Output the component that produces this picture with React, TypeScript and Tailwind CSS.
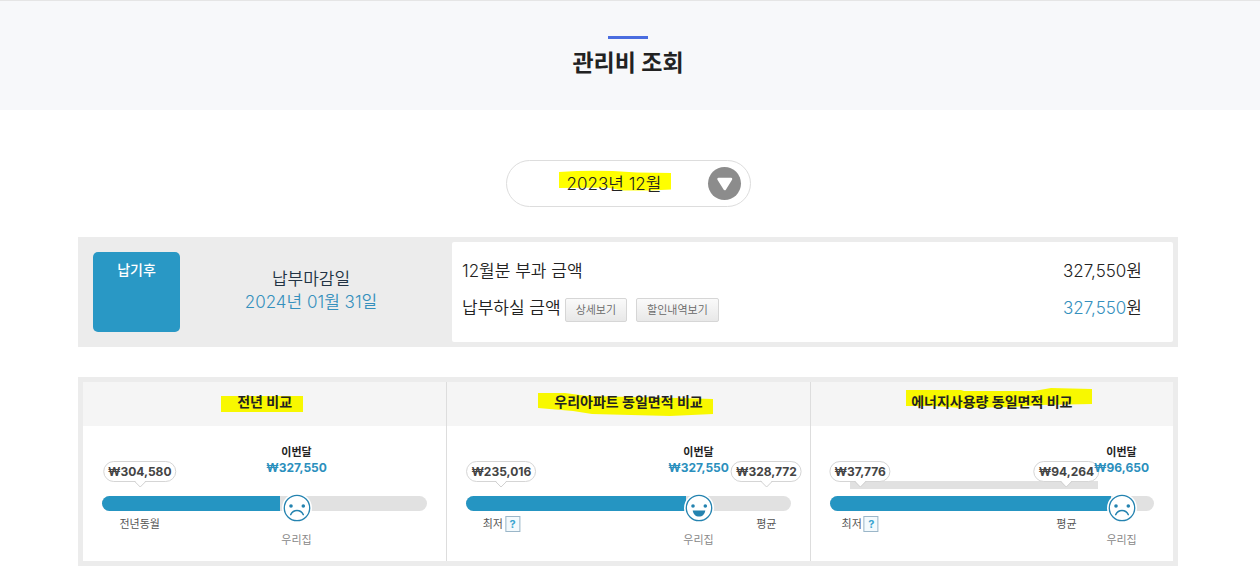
import { useState } from "react";

type Mood = "sad" | "happy";

interface Marker {
  label: string;
  amount: string;
  at: number;
  help?: boolean;
}

interface Comparison {
  id: string;
  title: string;
  highlight: string;
  current: string;
  currentAt: number;
  filled: number;
  mood: Mood;
  markers: Marker[];
  range?: { from: number; to: number };
}

const months = ["2023년 12월", "2023년 11월", "2023년 10월"];

const comparisons: Comparison[] = [
  {
    id: "year",
    title: "전년 비교",
    highlight: "56,14 138,14 138,30 56,30",
    current: "₩327,550",
    currentAt: 59.8,
    filled: 54.6,
    mood: "sad",
    markers: [{ label: "전년동월", amount: "₩304,580", at: 11.6 }],
  },
  {
    id: "apartment",
    title: "우리아파트 동일면적 비교",
    highlight:
      "10,11 37,11 59,14 150,16 185,17 185,32 142,34 64,32 45,29 10,26",
    current: "₩327,550",
    currentAt: 71.6,
    filled: 67.8,
    mood: "happy",
    markers: [
      { label: "최저", amount: "₩235,016", at: 10.8, help: true },
      { label: "평균", amount: "₩328,772", at: 92.5 },
    ],
  },
  {
    id: "energy",
    title: "에너지사용량 동일면적 비교",
    highlight:
      "14,8 69,8 72,9 142,9 159,6 200,7 200,22 149,23 122,25 69,26 42,24 14,24",
    current: "₩96,650",
    currentAt: 90,
    filled: 86.7,
    mood: "sad",
    markers: [
      { label: "최저", amount: "₩37,776", at: 9.4, help: true },
      { label: "평균", amount: "₩94,264", at: 73 },
    ],
    range: { from: 6.3, to: 82.8 },
  },
];

function Face({ mood }: { mood: Mood }) {
  return (
    <svg viewBox="0 0 30 30" className="size-[30px]" aria-hidden="true">
      <circle cx="15" cy="15" r="15" fill="#fff" />
      <circle cx="15" cy="15" r="12.7" fill="#fff" stroke="#2483b0" strokeWidth="1.3" />
      <circle cx="9" cy="13" r="1.8" fill="#2483b0" />
      <circle cx="21.3" cy="13" r="1.8" fill="#2483b0" />
      {mood === "sad" ? (
        <path
          d="M8.7 21.6c1.4-2.7 3.6-4 6.3-4s4.9 1.3 6.3 4"
          fill="none"
          stroke="#2483b0"
          strokeWidth="1.5"
          strokeLinecap="round"
        />
      ) : (
        <path d="M8.7 17.4h12.6c-.5 3.8-3 6.1-6.3 6.1s-5.8-2.3-6.3-6.1z" fill="#2483b0" />
      )}
    </svg>
  );
}

function Bubble({ amount }: { amount: string }) {
  return (
    <div className="relative whitespace-nowrap rounded-full border border-[#d5d5d5] bg-white px-1 text-[12px] leading-[19px] font-bold text-[#444]">
      {amount}
      <svg
        viewBox="0 0 14 8"
        className="absolute top-full left-1/2 h-2 w-3.5 -translate-x-1/2 -translate-y-px"
        aria-hidden="true"
      >
        <path d="M1 0h12l-6 7z" fill="#fff" />
        <path d="M1 1l6 6 6-6" fill="none" stroke="#d0d0d0" />
      </svg>
    </div>
  );
}

function Gauge({ data }: { data: Comparison }) {
  return (
    <div className="px-[19px] pt-[70px] pb-[50px]">
      <div className="relative h-[15px] rounded-full bg-[#e1e1e1]">
        <div
          className="h-full rounded-l-full bg-[#2595c2]"
          style={{ width: `${data.filled}%` }}
        />

        {data.range && (
          <div
            className="absolute bottom-full mb-[7px] h-2 bg-[#e1e1e1]"
            style={{
              left: `${data.range.from}%`,
              width: `${data.range.to - data.range.from}%`,
            }}
          />
        )}

        {/* Reference values */}
        {data.markers.map((marker) => (
          <div key={marker.label} style={{ left: `${marker.at}%` }} className="absolute inset-y-0 w-0">
            <div className="absolute bottom-full mb-3.5 -translate-x-1/2">
              <Bubble amount={marker.amount} />
            </div>
            <div className="absolute top-full mt-[5px] flex -translate-x-1/2 items-center gap-0.5 whitespace-nowrap text-[11px] leading-4 text-[#555]">
              {marker.label}
              {marker.help && (
                <button
                  type="button"
                  aria-label="도움말"
                  className="h-4 w-[15px] border border-[#9bb6c8] bg-[#f3fafd] text-[11px] leading-3.5 font-bold text-[#3aa5d0]"
                >
                  ?
                </button>
              )}
            </div>
          </div>
        ))}

        {/* This month */}
        <div style={{ left: `${data.currentAt}%` }} className="absolute inset-y-0 w-0">
          <div className="absolute bottom-full mb-[21px] -translate-x-1/2 whitespace-nowrap text-center leading-[15px] font-bold">
            <p className="text-[11px] text-[#222]">이번달</p>
            <p className="text-[12px] text-[#2b8fbd]">{data.current}</p>
          </div>
          <div className="absolute -top-[3px] w-[30px] -translate-x-1/2">
            <Face mood={data.mood} />
          </div>
          <p className="absolute top-full mt-[21px] -translate-x-1/2 whitespace-nowrap text-[11px] leading-4 text-[#888]">
            우리집
          </p>
        </div>
      </div>
    </div>
  );
}

function MonthSelect() {
  const [month, setMonth] = useState(months[0]);

  return (
    <div className="relative mx-auto h-[47px] w-[245px] rounded-full border border-[#ddd] bg-white">
      <svg viewBox="0 0 245 47" className="absolute -top-px -left-px h-[47px] w-[245px]" aria-hidden="true">
        <path
          d="M53 12Q80 10 107 11L131 12.5L165 13V29.5L144 30.5H117L101 27.5L53 28z"
          fill="#ff0"
        />
        <circle cx="218.5" cy="23.5" r="16.5" fill="#8c8c8c" />
        <path
          d="M212.5 19h12.5l-6.2 10z"
          fill="#fff"
          stroke="#fff"
          strokeWidth="2.5"
          strokeLinejoin="round"
        />
      </svg>
      <select
        aria-label="조회 월"
        value={month}
        onChange={(e) => setMonth(e.target.value)}
        className="relative h-full w-full cursor-pointer appearance-none bg-transparent pt-0.5 pr-7 text-center text-[17px] font-[350] text-[#222] [text-align-last:center]"
      >
        {months.map((item) => (
          <option key={item}>{item}</option>
        ))}
      </select>
    </div>
  );
}

const smallButton =
  "h-6 rounded-xs border border-[#d6d6d6] bg-linear-to-b from-[#fafafa] to-[#e8e8e8] px-2.5 text-[11px] leading-5 text-[#666]";

export default function App() {
  return (
    <div className="min-h-screen bg-white font-['Inter','Noto_Sans_CJK_KR',sans-serif] text-[#222]">
      <header className="border-t border-[#e5e5e5] bg-[#f7f8fa] pt-[35px] pr-1 pb-[30px] text-center">
        <div className="mx-auto h-[3px] w-10 bg-[#4a6de0]" />
        <h1 className="mt-2 text-[23px] leading-[33px] font-bold">관리비 조회</h1>
      </header>

      <main className="pt-[50px] pr-1 pb-5">
        <MonthSelect />

        <div className="mx-auto mt-[30px] max-w-[1100px]">
          {/* Bill summary */}
          <section className="flex border-[5px] border-[#ececec] bg-[#ececec] text-[17px] font-[350]">
            <div className="flex w-[369px] shrink-0 items-center p-2.5">
              <div className="h-20 w-[87px] rounded-[5px] bg-[#2998c5] pt-2 text-center text-[14px] leading-5 font-medium text-white">
                납기후
              </div>
              <div className="flex-1 pb-0.5 text-center leading-[23px]">
                <p className="text-[#234]">납부마감일</p>
                <p className="text-[#3590bd]">2024년 01월 31일</p>
              </div>
            </div>
            <div className="flex h-[100px] flex-1 flex-col gap-[13px] rounded-xs bg-white pt-[17px] pr-[31px] pl-2.5 leading-6">
              <div className="flex justify-between">
                <span>12월분 부과 금액</span>
                <span>327,550원</span>
              </div>
              <div className="flex justify-between">
                <div className="flex">
                  <span>납부하실 금액</span>
                  <div className="mt-0.5 ml-1 flex gap-[9px]">
                    <button type="button" className={smallButton}>
                      상세보기
                    </button>
                    <button type="button" className={smallButton}>
                      할인내역보기
                    </button>
                  </div>
                </div>
                <span>
                  <span className="text-[#3590bd]">327,550</span>원
                </span>
              </div>
            </div>
          </section>

          {/* Comparisons */}
          <section className="mt-[30px] grid grid-cols-3 border-[5px] border-[#ececec]">
            {comparisons.map((item) => (
              <article key={item.id} className="border-l border-[#ddd] first:border-l-0">
                <div className="relative h-11 bg-[#f5f5f5] text-center">
                  <svg
                    viewBox="0 0 200 44"
                    className="absolute left-1/2 h-11 w-[200px] -translate-x-1/2"
                    aria-hidden="true"
                  >
                    <polygon points={item.highlight} fill="#f8f800" />
                  </svg>
                  <h2 className="relative text-[14px] leading-10 font-bold">{item.title}</h2>
                </div>
                <Gauge data={item} />
              </article>
            ))}
          </section>
        </div>
      </main>
    </div>
  );
}
